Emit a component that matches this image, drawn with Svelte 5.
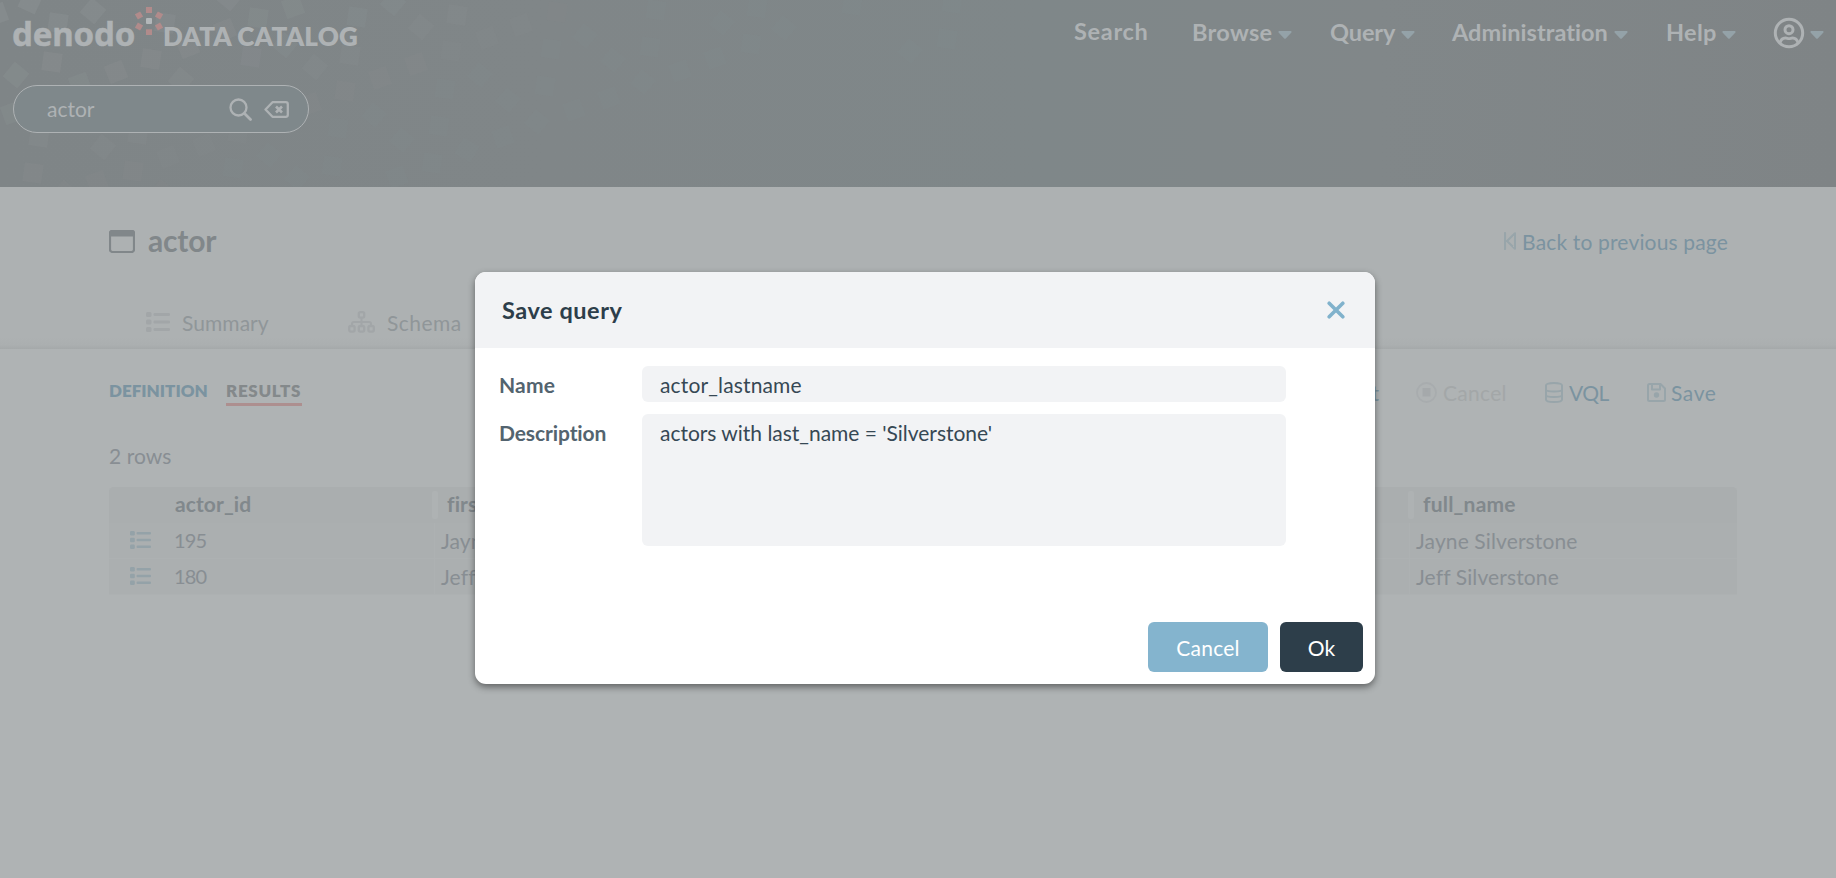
<script>
  const nav = [
    { label: 'Search', track: 0.7, width: 112, pitch: 118, caret: false },
    { label: 'Browse', track: 0.3, width: 80, pitch: 138, caret: true },
    { label: 'Query', track: -0.1, width: 65, pitch: 122, caret: true },
    { label: 'Administration', track: 0.05, width: 156, pitch: 214, caret: true },
    { label: 'Help', track: 0.3, width: 50, pitch: 107, caret: true }
  ];

  // centre x, centre y, rotation of each header confetti square
  const squares = [
    [30, 2, 25], [-3, 14, -20], [93, 11, 40], [58, 23, 8], [165, 23, 8], [16, 75, 40],
    [116, 72, -22], [151, 59, 8], [52, 62, 8], [80, 84, -20], [181, 80, 40], [188, 47, -22],
    [12, 113, -20], [103, 147, 40], [39, 137, 8], [138, 134, 8], [33, 173, 8], [133, 171, 8],
    [97, 182, -20], [65, 193, 40], [168, 157, -22], [204, 145, -22], [238, 133, 8], [233, 168, 8],
    [162, 192, 40], [251, 57, 8], [225, 30, -22], [258, 18, 8], [285, 45, 40], [229, -2, 40],
    [293, 7, -20], [315, 67, 40], [357, 17, 8], [350, 55, 8], [380, 78, -20], [345, 91, 8],
    [310, 104, -20], [338, 128, 8], [374, 115, 40], [269, 155, 40], [297, 178, 40], [332, 166, 8],
    [393, 3, 40], [421, 27, 40], [416, 64, -20], [445, 89, 8], [402, 140, 40], [432, 163, 8],
    [397, 177, -20], [457, 15, 8], [451, 51, 8], [487, 38, -20], [521, 25, -20], [557, 12, 8],
    [480, 75, 40], [439, 126, 8], [551, 49, 8], [585, 36, 40], [508, 100, 40], [545, 86, 8],
    [467, 150, 30], [503, 137, -20], [537, 122, -50], [574, 110, -20], [609, 98, -20], [613, 60, 40],
    [650, 47, 8], [656, 10, 8], [643, 82, -50], [680, 71, -20], [715, 58, -20], [722, 23, 40],
    [751, 44, 8], [757, 8, 8], [784, 28, -50], [852, 5, 8], [910, 51, 40], [947, 39, 8], [952, 3, 8]
  ];

  const rows = [
    { id: '195', first: 'Jayne', full: 'Jayne Silverstone' },
    { id: '180', first: 'Jeff', full: 'Jeff Silverstone' }
  ];
</script>

{#snippet caret()}
  <svg class="caret" width="14" height="8" viewBox="0 0 14 8"><path d="M1.5 0h11c1 0 1.4 1 .7 1.7L8 7.300q-1 1-2 0L.8 1.700C.1 1 .5 0 1.500 0z" fill="#94a2a8" /></svg>
{/snippet}

{#snippet list(w, h, color)}
  <svg width={w} height={h} viewBox="0 0 24 20" preserveAspectRatio="none" fill={color}>
    {#each [0, 7.5, 15] as y}
      <rect x="0" {y} width="5.500" height="5" rx="1.500" />
      <rect x="7.500" y={y + 1.1} width="16.500" height="2.800" rx="1.200" />
    {/each}
  </svg>
{/snippet}

<div class="page">
  <header>
    <svg class="confetti" width="1836" height="187" viewBox="0 0 1836 187">
      <defs>
        <linearGradient id="sheen" x1="0" x2="1">
          <stop offset="0" stop-color="#7f8587" />
          <stop offset=".3" stop-color="#808688" />
          <stop offset=".57" stop-color="#7f8789" />
          <stop offset=".75" stop-color="#818789" />
          <stop offset="1" stop-color="#7f8486" />
        </linearGradient>
      </defs>
      <rect width="1836" height="187" fill="url(#sheen)" />
      {#each squares as [x, y, r]}
        <rect x={x - 9.5} y={y - 9.5} width="19" height="19" transform="rotate({r} {x} {y})" fill="#b0b6b8" opacity={Math.max(0.018, 0.13 - x * 0.00018 - y * 0.0004)} />
      {/each}
    </svg>
    <div class="top">
      <div class="brand">
        <span class="logo">denodo</span>
        <svg class="spark" width="28" height="28" viewBox="0 0 28 28" fill="#b18b8b">
          <rect x="11" y="0" width="6" height="6" />
          <rect x="11" y="22.300" width="6" height="6" />
          <rect x="1" y="5.500" width="6" height="6" transform="rotate(-30 4 8.500)" />
          <rect x="21" y="5.500" width="6" height="6" transform="rotate(30 24 8.500)" />
          <rect x="1" y="16.500" width="6" height="6" transform="rotate(30 4 19.500)" />
          <rect x="21" y="16.500" width="6" height="6" transform="rotate(-30 24 19.500)" />
          <rect x="11" y="11" width="6" height="6" rx="1" fill="#b3b7b9" />
        </svg>
        <span class="product">DATA CATALOG</span>
      </div>
      <nav>
        {#each nav as n}
          <span class="item" class:plain={!n.caret} style="width:{n.pitch}px">
            <span style="letter-spacing:{n.track}px;width:{n.width}px">{n.label}</span>
            {#if n.caret}{@render caret()}{/if}
          </span>
        {/each}
        <span class="item user">
          <svg width="32" height="32" viewBox="0 0 32 32" fill="none" stroke="#aeb2b4" stroke-width="3">
            <circle cx="16" cy="16" r="13.700" />
            <circle cx="16" cy="12.700" r="4" />
            <path d="M7 26c.8-3.700 3.200-5 5.500-5 1.500 0 2 .6 3.500.6s2-.6 3.500-.6c2.300 0 4.700 1.300 5.500 5" stroke-width="2.800" />
          </svg>
          {@render caret()}
        </span>
      </nav>
    </div>
    <div class="search">
      <span>actor</span>
      <svg class="lens" width="23" height="23" viewBox="0 0 23 23" fill="none" stroke="#aeb2b4" stroke-width="2.300"><circle cx="9.500" cy="9.500" r="8" /><path d="M15.500 15.500l6 6" stroke-width="2.800" stroke-linecap="round" /></svg>
      <svg class="erase" width="25" height="17" viewBox="0 0 25 17" fill="none" stroke="#aeb2b4" stroke-width="2.300"><path d="M8.500 1.200h13.300a2 2 0 0 1 2 2v10.600a2 2 0 0 1-2 2H8.500L1.500 8.500z" stroke-linejoin="round" /><path d="M12 5.500l6 6m0-6l-6 6" stroke-width="2.600" /></svg>
    </div>
  </header>

  <section class="title">
    <div class="heading">
      <svg width="26" height="23" viewBox="0 0 26 23"><rect x="1" y="1" width="24" height="21" rx="2.500" fill="none" stroke="#81878a" stroke-width="2.200" /><path d="M0 6.500V3a3 3 0 0 1 3-3h20a3 3 0 0 1 3 3v3.500z" fill="#81878a" /></svg>
      <h1>actor</h1>
      <a class="back" href="#top">
        <svg width="12" height="18" viewBox="0 0 12 18" fill="none" stroke="#98a5aa" stroke-width="2.100" stroke-linejoin="round" stroke-linecap="round"><path d="M1 1v16M11 1.300v15.400L3 9z" /></svg>
        <span>Back to previous page</span>
      </a>
    </div>
    <div class="tabs">
      {@render list(24, 20, '#a2a6a8')}
      <span class="summary">Summary</span>
      <svg width="27" height="22" viewBox="0 0 27 22" fill="none" stroke="#a2a6a8" stroke-width="2.300"><rect x="10.800" y="1.200" width="5.400" height="5.400" rx="1.500" /><rect x="1.200" y="15" width="5.400" height="5.600" rx="1.500" /><rect x="10.800" y="15" width="5.400" height="5.600" rx="1.500" /><rect x="20.400" y="15" width="5.400" height="5.600" rx="1.500" /><path d="M13.500 7v8M4 15v-2q0-2 2-2h15q2 0 2 2v2" stroke-width="2" /></svg>
      <span class="schema">Schema</span>
    </div>
  </section>

  <main>
    <div class="bar">
      <span class="sub def">DEFINITION</span>
      <span class="sub res">RESULTS</span>
      <div class="actions">
        <span class="act export">Export</span>
        <svg class="stop" width="21" height="21" viewBox="0 0 21 21"><circle cx="10.500" cy="10.500" r="9.500" fill="none" stroke="#a8acae" stroke-width="1.800" /><rect x="6.500" y="6" width="8" height="8.500" fill="#a5a9ab" /></svg>
        <span class="act cancel">Cancel</span>
        <svg class="db" width="18" height="21" viewBox="0 0 18 21" fill="none" stroke="#98a5aa" stroke-width="2"><path d="M1 3.500C1 2 4 1 9 1s8 1 8 2.500v14c0 1.500-3 2.500-8 2.500s-8-1-8-2.500zM1 7.500c0 1.300 3.600 2 8 2s8-.7 8-2M1 13c0 1.300 3.600 2 8 2s8-.7 8-2" /></svg>
        <span class="act vql">VQL</span>
        <svg class="disk" width="19" height="19" viewBox="0 0 19 19" fill="none" stroke="#98a5aa" stroke-width="2" stroke-linejoin="round"><path d="M2.500 1h11L18 5.500v11a1.500 1.500 0 0 1-1.500 1.500h-14A1.500 1.500 0 0 1 1 16.500v-14A1.500 1.500 0 0 1 2.500 1zM5 1v5.500h8V1" /><circle cx="9.500" cy="12" r="2.700" fill="#98a5aa" stroke="none" /></svg>
        <span class="act save">Save</span>
      </div>
    </div>
    <div class="count">2 rows</div>
    <div class="table">
      <div class="row head">
        <span class="c1"></span><span class="c2 th id">actor_id</span>
        <i></i><span class="c3 th">first_name</span>
        <i></i><span class="c4 th full">full_name</span>
      </div>
      {#each rows as r}
        <div class="row body">
          <span class="c1">{@render list(21, 18, '#94a2a8')}</span>
          <span class="c2 num">{r.id}</span>
          <span class="c3">{r.first}</span>
          <span class="c4">{r.full}</span>
        </div>
      {/each}
    </div>
  </main>

  <div class="overlay">
    <div class="modal" role="dialog">
      <div class="mhead">
        <h2>Save query</h2>
        <svg width="18" height="18" viewBox="0 0 18 18" stroke="#81b2cc" stroke-width="3.600" stroke-linecap="round"><path d="M2.200 2.200l13.600 13.600M15.800 2.200L2.200 15.800" /></svg>
      </div>
      <div class="form">
        <span class="label name">Name</span>
        <div class="field one">actor_lastname</div>
        <span class="label desc">Description</span>
        <div class="field area">actors with last_name = 'Silverstone'</div>
      </div>
      <div class="buttons">
        <button class="no">Cancel</button>
        <button class="yes">Ok</button>
      </div>
    </div>
  </div>
</div>

<style>
  :global(body) { overflow: hidden; }
  .page { position: relative; width: 1836px; height: 878px; overflow: hidden; background: #afb3b4; font-family: Lato, "Open Sans", sans-serif; font-size: 21px; line-height: 24px; color: #888e93; white-space: nowrap; font-variant-ligatures: none; }
  svg { display: block; flex: none; }
  header { position: relative; height: 187px; color: #aeb2b4; }
  .confetti { position: absolute; left: 0; top: 0; }
  .top { position: relative; display: flex; height: 85px; padding: 0 12px 0 13px; justify-content: space-between; align-items: flex-start; }
  .brand { display: flex; align-items: flex-start; padding-top: 7px; }
  .logo { width: 122px; font: 700 33px/44px "Noto Sans", sans-serif; letter-spacing: -0.150px; margin-top: 5px; text-indent: -1px; -webkit-text-stroke: 0.500px #aeb2b4; }
  .product { font-weight: 800; font-size: 26px; line-height: 30px; letter-spacing: 0.200px; margin: 14px 0 0 0; }
  nav { display: flex; align-items: flex-start; padding-top: 18px; font-size: 23.500px; font-weight: 700; line-height: 28px; }
  .item { display: flex; align-items: flex-start; }
  .item > span { flex: none; }
  .plain { margin-top: -1px; }
  .item .caret { margin: 13px 0 0 6px; }
  .user { margin: -1px 0 0; }
  .user .caret { margin: 14px 0 0 5px; }
  .search { position: relative; box-sizing: border-box; width: 296px; height: 48px; margin-left: 13px; border: 1px solid #aeb2b4; border-radius: 24px; background: #7f888b; display: flex; align-items: center; padding: 0 19px 0 33px; }
  .search span { flex: 1; }
  .erase { margin-left: 12px; }
  .title { height: 162px; background: linear-gradient(#adb1b2 0, #adb1b2 150px, #abafb0 158px, #a5a9aa 162px); }
  .heading { display: flex; align-items: flex-start; padding: 43px 108px 0 109px; height: 82px; box-sizing: border-box; }
  h1 { margin: -8px 0 0 13px; font-size: 30px; line-height: 36px; font-weight: 700; color: #81878a; flex: 1; letter-spacing: -0.200px; }
  .back { display: flex; align-items: flex-start; color: #7b93a0; text-decoration: none; letter-spacing: 0.160px; }
  .back svg { margin: 2px 6px 0 0; }
  .tabs { display: flex; align-items: center; padding: 41px 0 0 146px; color: #909699; }
  .tabs span { padding-top: 1px; margin-bottom: -1px; }
  .summary { margin: 0 0 0 12px; width: 166px; letter-spacing: 0.050px; }
  .schema { margin-left: 12px; letter-spacing: 0.450px; }
  .bar { display: flex; height: 94px; padding-left: 109px; align-items: flex-start; }
  .sub { font-size: 17px; font-weight: 800; line-height: 22px; margin-top: 31px; height: 23px; }
  .def { color: #7b93a0; width: 117px; }
  .res { color: #84898b; letter-spacing: 0.700px; width: 76px; border-bottom: 3px solid #ad8f8f; }
  .actions { margin-left: auto; display: flex; align-items: flex-start; padding: 31px 120px 0 0; color: #7b93a0; }
  .actions svg { margin-top: 2px; }
  .act { line-height: 26px; height: 24px; }
  .export { margin-right: 37px; }
  .cancel { width: 64px; margin: 0 38px 0 6px; color: #a3a7a8; letter-spacing: 0.300px; }
  .vql { width: 41px; margin: 0 37px 0 6px; letter-spacing: -0.500px; }
  .save { width: 45px; margin-left: 5px; letter-spacing: 0.600px; }
  .actions .disk { margin-top: 3px; }
  .count { padding-left: 109px; height: 43px; margin-top: 1px; letter-spacing: 0.050px; }
  .table { width: 1628px; margin-left: 109px; border-radius: 5px 5px 0 0; background: #abafb0; overflow: hidden; }
  .row { display: grid; grid-template-columns: 66px 259px 975px 1fr; height: 35px; margin-bottom: 1px; }
  .row > span { display: block; line-height: 34px; }
  .head { grid-template-columns: 66px 257px 6px 970px 6px 1fr; height: 36px; margin: 0; background: #aaaeaf; }
  .head i { background: #aeb2b3; border-radius: 2px; height: 28px; margin-top: 4px; }
  .head .th { font-weight: 700; color: #81888c; letter-spacing: 0.100px; line-height: 34px; padding: 0 0 0 9px; }
  .head .id { padding-left: 0; letter-spacing: 0.100px; }
  .head .full { padding-left: 9px; letter-spacing: 0.200px; }
  .body { box-shadow: 0 1px #adb1b2; }
  .body .c1 { padding: 8px 0 0 21px; }
  .body .c2 { letter-spacing: -0.900px; font-size: 20px; line-height: 35px; margin-left: -1px; }
  .body .c3, .body .c4 { border-left: 1px solid #adb1b2; padding: 1px 0 0 6px; letter-spacing: 0.100px; line-height: 34px; }
  .body .c4 { letter-spacing: 0.120px; }
  .overlay { position: absolute; left: 0; top: 0; width: 1836px; height: 878px; box-sizing: border-box; padding: 272px 0 0 475px; }
  .modal { width: 900px; height: 412px; border-radius: 11px; background: #fff; box-shadow: 0 3px 7px rgba(0, 0, 0, 0.450); overflow: hidden; display: flex; flex-direction: column; }
  .mhead { height: 76px; background: #f2f3f5; display: flex; align-items: center; justify-content: space-between; padding: 0 30px 0 27px; }
  h2 { margin: -1px 0 0; font-size: 23.500px; line-height: 30px; font-weight: 700; color: #2d3e4a; letter-spacing: 0.550px; }
  .form { display: grid; grid-template-columns: 143px 644px; row-gap: 12px; padding: 18px 0 0 24px; color: #364854; }
  .label { font-weight: 700; color: #53646f; line-height: 37px; height: 36px; }
  .name { letter-spacing: 0.200px; }
  .desc { letter-spacing: -0.100px; }
  .field { background: #f2f3f5; border-radius: 6px; padding-left: 18px; height: 36px; line-height: 38px; letter-spacing: 0; box-sizing: border-box; }
  .one { letter-spacing: 0.150px; }
  .area { height: 132px; letter-spacing: -0.020px; }
  .buttons { display: flex; justify-content: flex-end; gap: 12px; margin-top: auto; padding: 0 12px 12px; }
  button { height: 50px; border: 0; border-radius: 6px; color: #fff; font: 400 21px/24px Lato, sans-serif; padding: 1px 0 0; letter-spacing: 0.200px; }
  .no { width: 120px; background: #84b4ce; }
  .yes { width: 83px; background: #2d3e4a; }
</style>
